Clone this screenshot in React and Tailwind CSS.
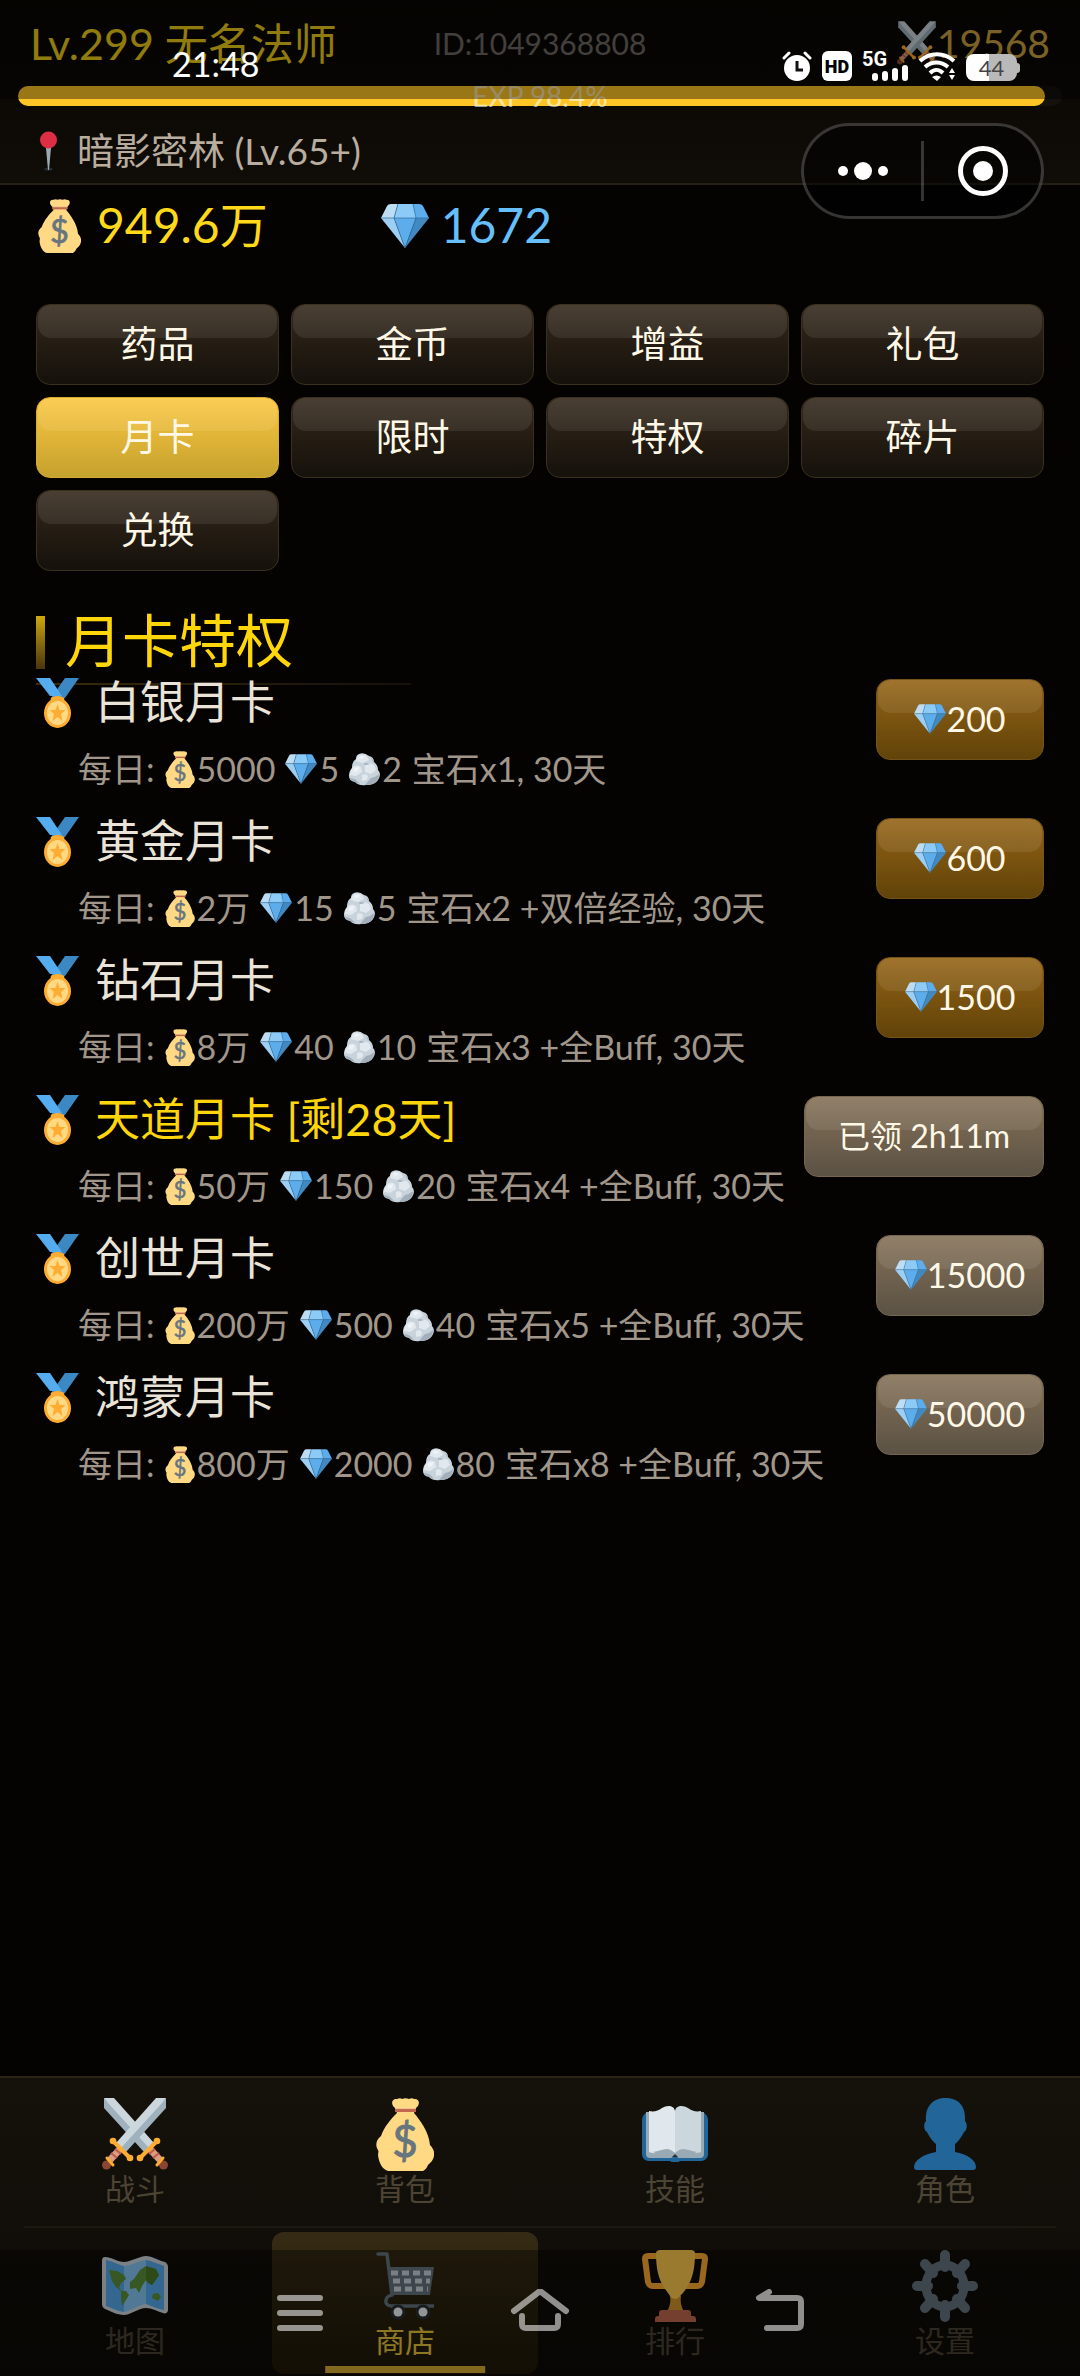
import React from 'react';

const Bag = ({ className }) => (
  <svg viewBox="0 0 58 73" className={className} aria-hidden="true">
    <path fill="#ffd983" d="M19 10C14 6 16 0 21 1c2-1 4-1 5 0 2-1 5-1 7 0 2-1 4-1 5 0 5-1 7 5 2 9l-2 5c6 7 15 19 16 32 3 3 5 7 4 11-1 5-4 7-6 9-1 3-3 5-5 6H12c-6-2-9-8-10-16 0-2 1-3 0-5-3-5-2-10 3-14C8 29 15 21 21 15z" />
    <path fill="#c1694f" d="M19 11h21v3H19z" />
    <path fill="#e6aaaa" opacity=".5" d="M19 10h21v1H19z" />
    <text x="29" y="59" textAnchor="middle" fontSize="44" fontFamily="Lato, sans-serif" stroke="#67757f" strokeWidth="1" fill="#67757f">$</text>
  </svg>
);

const Diamond = ({ className }) => (
  <svg viewBox="0 0 48 44" className={className} aria-hidden="true">
    <path fill="#bdddf4" d="M0 14 6 2q1-2 4-2h7l-4 14z" />
    <path fill="#8ccaf7" d="M17 0h15l4 14H13z" />
    <path fill="#5dadec" d="M32 0h6q3 0 4 2l6 12H35z" />
    <path fill="#9dcff5" d="M0 14h13l11 30z" />
    <path fill="#5dadec" d="M13 14h22L24 44z" />
    <path fill="#4289c1" d="M35 14h13L24 44z" />
    <path fill="none" stroke="#2f6e9f" strokeWidth=".7" d="M17 0l-4 14 11 30 11-30-3-14M0 14h48" />
  </svg>
);

const Rock = ({ className }) => (
  <svg viewBox="0 0 31 33" className={className} aria-hidden="true">
    <path fill="#c9d3db" d="M10 1q5-2 10 2 5 1 5 6 4 3 4 8 4 4 0 10-3 5-12 5-7 1-11-3-6-1-6-6 0-5 3-8 0-7 4-9 0-4 3-5z" />
    <path fill="#e1e8ee" d="M10 2q4-2 8 1l2 4-6 3-7-2q0-4 3-6zM4 14q4-3 8 0l1 5-6 4-6-1q0-5 3-8zM16 12q5-3 9 0l2 5-5 4-6-2zM13 22q4-2 6 1l-1 4-5 1z" />
    <path fill="#f0f4f7" d="M11 3q3-1 5 1l-3 2-3-1zM5 15l5-1-1 4-4 1z" />
    <path fill="#a3b0bc" d="M22 25q5-1 8-4 0 7-6 10-5 1-8 1 3-4 6-7zM1 25q6 0 10 6-4-1-6-3-3 0-4-3zM14 11l3-1 4 1-4 1zM22 5q3 2 3 5-2-2-3-5z" />
  </svg>
);

const Medal = ({ className }) => (
  <svg viewBox="0 0 43 50" className={className} aria-hidden="true">
    <path fill="#3b88c3" d="M29 0h14L29 20H15z" />
    <path fill="#55acee" d="M0 0h14l12 18H14z" />
    <ellipse cx="21.500" cy="21" rx="7" ry="3" fill="#ffac33" />
    <ellipse cx="21.500" cy="35" rx="13.500" ry="15" fill="#ffac33" />
    <ellipse cx="21.500" cy="35" rx="10.500" ry="12" fill="#ffd983" />
    <path fill="#ffac33" d="m21.500 26 2 6h6l-4.500 4 1.500 7-5-4-5 4 1.500-7-4.500-4h6z" />
  </svg>
);

const Pin = ({ className }) => (
  <svg viewBox="0 0 17 40" className={className} aria-hidden="true">
    <ellipse cx="8.500" cy="38" rx="4" ry="1.500" fill="#292f33" />
    <path fill="#99aab5" d="M6 17h5L9 39H8z" />
    <circle cx="8.500" cy="9" r="8.500" fill="#dd2e44" />
  </svg>
);

const Sword = () => (
  <>
    <path fill="#9fb1bd" d="M64 0v10L24 54l-9-8z" />
    <path fill="#ccd6dd" d="M64 0H54L14 45l5 5L60 5z" />
    <path fill="none" stroke="#d99e82" strokeWidth="7" d="M19 50 8 62" />
    <path fill="none" stroke="#be5b4a" strokeWidth="2" d="m13 51 6 5M9 55l6 5" />
    <path fill="none" stroke="#ffac33" strokeWidth="4" d="m11 43 17 17" />
    <circle cx="11" cy="43" r="3.300" fill="#ffac33" />
    <circle cx="28" cy="60" r="3.300" fill="#ffac33" />
    <circle cx="4.500" cy="67" r="4.500" fill="#8a4633" />
    <path fill="none" stroke="#ffac33" strokeWidth="3" strokeLinecap="round" d="m5 60 6 7" />
  </>
);

const Swords = ({ className }) => (
  <svg viewBox="0 0 66 72" className={className} aria-hidden="true">
    <g transform="matrix(-1 0 0 1 66 0)"><Sword /></g>
    <Sword />
  </svg>
);

const Book = ({ className }) => (
  <svg viewBox="0 0 66 56" className={className} aria-hidden="true">
    <path fill="#226699" d="M4 7h58c2 1 4 4 4 7v34c0 4-3 7-7 7H38c-2 2-8 2-10 0H7c-4 0-7-3-7-7V14c0-3 2-6 4-7z" />
    <path fill="#99aab5" d="M4 6h58v42c0 3-2 4-4 4H37l-4-2-4 2H8c-2 0-4-1-4-4z" />
    <path fill="#e1e8ed" d="M7 5c5 1 9 0 13-3 5-3 12-3 13 3v44c-6-5-12-4-16-3-4 2-7 1-10 0z" />
    <path fill="#ccd6dd" d="M59 5c-5 1-9 0-13-3-5-3-12-3-13 3v44c6-5 12-4 16-3 4 2 7 1 10 0z" />
    <path fill="#99aab5" d="M11 46c9-1 14-7 22 1 8-8 13-2 22-1-8 4-15 0-22 4-7-4-14 0-22-4z" />
    <path fill="#292f33" d="m33 48 3 3h-6z" />
  </svg>
);

const Bust = ({ className }) => (
  <svg viewBox="0 0 62 72" className={className} aria-hidden="true">
    <path fill="#269" d="M22 46C17 42 14 36 13 34c-3-1-4-8-1-11C11 8 19 0 32 0s20 9 19 23c3 3 2 10-1 11-1 2-4 8-9 12v8c12 2 21 8 21 15 0 2-1 3-3 3H3c-2 0-3-1-3-3 0-7 10-13 22-15z" />
  </svg>
);

const WorldMap = ({ className }) => (
  <svg viewBox="0 0 66 60" className={className} aria-hidden="true">
    <path fill="#ccd6dd" d="M3 1c6 0 13 5 19 5S38 0 44 0s14 5 19 6c2 1 3 3 3 5v43c0 3-3 4-5 3-6-2-12-5-17-5-7 0-16 7-22 7-7 0-14-4-19-6-2-1-3-3-3-5V5c0-3 1-4 3-4z" />
    <path fill="#55acee" d="M4 4c6 1 13 5 18 6v46C16 55 10 52 4 50zM44 4c6 1 12 4 18 6v44c-6-1-12-4-18-6z" />
    <path fill="#88c9f9" d="M22 10c6 0 15-5 22-6v44c-7 1-16 7-22 8z" />
    <path fill="#5c913b" d="M7 14l8 1 7 4 2 4-5 4-2 5 4 5-7-6-4-6zM19 35l5 0 3 4-3 5-4 6-1-8zM28 26l4-3 6-9 6-4 10 3 3 6-4 6-3 4-4-2-2-3-4 6-3 7-3-5-6 1zM51 38l5-1 3 4-3 4-6-3z" />
    <path fill="#3e721d" opacity=".6" d="M44 10l10 3 3 6-4 6-3 4-4-2-2-3z" />
  </svg>
);

const Cart = ({ className }) => (
  <svg viewBox="0 0 58 68" className={className} aria-hidden="true">
    <path fill="none" stroke="#66757f" strokeWidth="3.500" strokeLinecap="round" strokeLinejoin="round" d="M2 2h9l5 41c-8 1-8 11-1 11h42" />
    <path fill="#66757f" d="M12 15h46l-4 28H15z" />
    <path fill="none" stroke="#ccd6dd" strokeWidth="5" strokeDasharray="7 4" d="M15 21h40M17 29h37M18 37h34" />
    <circle cx="22" cy="60" r="7.500" fill="#292f33" />
    <circle cx="22" cy="60" r="4.500" fill="#f5f8fa" />
    <circle cx="47" cy="60" r="7.500" fill="#292f33" />
    <circle cx="47" cy="60" r="4.500" fill="#f5f8fa" />
  </svg>
);

const Trophy = ({ className }) => (
  <svg viewBox="0 0 66 72" className={className} aria-hidden="true">
    <path fill="none" stroke="#ffac33" strokeWidth="6" strokeLinejoin="round" d="M17 6H6c-2 0-3 1-3 3l3 23c1 3 2 4 5 4h13M49 6h11c2 0 3 1 3 3l-3 23c-1 3-2 4-5 4H42" />
    <path fill="#d4952c" d="M28 46h11c-1 6 0 10 3 16H25c3-6 4-10 3-16z" />
    <path fill="#ffcc4d" d="M14 3c0-2 2-3 4-3h31c2 0 4 1 4 3 0 20-4 30-12 40-3 3-5 6-8 6s-5-3-7-6C18 33 14 23 14 3z" />
    <path fill="#c1694f" d="M17 63c0-2 1-3 3-3h26c2 0 3 1 3 3v3h2c2 0 3 1 3 3v3H13v-3c0-2 1-3 3-3h1z" />
  </svg>
);

const Gear = ({ className }) => (
  <svg viewBox="0 0 66 72" className={className} aria-hidden="true">
    <g stroke="#66757f" strokeWidth="10" strokeLinecap="round">
      <path d="M33 5v12M33 55v12M5 36h11M50 36h11M13 14l8 9M45 49l8 9M53 14l-8 9M21 49l-8 9" />
    </g>
    <ellipse cx="33" cy="36" rx="19" ry="21" fill="none" stroke="#66757f" strokeWidth="9" />
  </svg>
);

const tabs = ['药品', '金币', '增益', '礼包', '月卡', '限时', '特权', '碎片', '兑换'];

const cards = [
  { name: '白银月卡', gold: '5000', gem: '5', stone: '2', rest: '宝石x1, 30天', price: '200', tone: 'gold' },
  { name: '黄金月卡', gold: '2万', gem: '15', stone: '5', rest: '宝石x2 +双倍经验, 30天', price: '600', tone: 'gold' },
  { name: '钻石月卡', gold: '8万', gem: '40', stone: '10', rest: '宝石x3 +全Buff, 30天', price: '1500', tone: 'gold' },
  { name: '天道月卡 [剩28天]', gold: '50万', gem: '150', stone: '20', rest: '宝石x4 +全Buff, 30天', claimed: '已领 2h11m', tone: 'grey' },
  { name: '创世月卡', gold: '200万', gem: '500', stone: '40', rest: '宝石x5 +全Buff, 30天', price: '15000', tone: 'grey' },
  { name: '鸿蒙月卡', gold: '800万', gem: '2000', stone: '80', rest: '宝石x8 +全Buff, 30天', price: '50000', tone: 'grey' },
];

const navTop = [
  { label: '战斗', icon: <Swords className="h-[72px] w-[66px]" /> },
  { label: '背包', icon: <Bag className="h-[73px] w-[58px]" /> },
  { label: '技能', icon: <Book className="h-[56px] w-[66px]" /> },
  { label: '角色', icon: <Bust className="h-[72px] w-[62px]" /> },
];

const navBottom = [
  { label: '地图', icon: <WorldMap className="h-[60px] w-[66px]" /> },
  { label: '商店', icon: <Cart className="h-[68px] w-[58px]" />, active: true },
  { label: '排行', icon: <Trophy className="h-[72px] w-[66px]" /> },
  { label: '设置', icon: <Gear className="h-[72px] w-[66px]" /> },
];

const tones = {
  dark: 'border-[#3a301d] from-[#35291c] to-[#15110b]',
  active: 'border-[#d6ab33] from-[#fbc740] to-[#c5a12e]',
  gold: 'border-[#74531a] from-[#946416] to-[#614309]',
  grey: 'border-[#756650] from-[#857157] to-[#5b5244]',
};

const GlossButton = ({ tone, className = '', children, ...props }) => (
  <button
    type="button"
    className={`relative h-[81px] rounded-[14px] border bg-linear-to-b text-[#fff8e7] ${tones[tone]} ${className}`}
    {...props}
  >
    <span className="absolute inset-x-px top-0 h-[33px] rounded-[13px] bg-linear-to-b from-white/10 to-white/8" />
    <span className="relative flex items-center justify-center pb-[2px]">{children}</span>
  </button>
);

const NavItem = ({ label, icon, active }) => (
  <button
    type="button"
    aria-current={active ? 'page' : undefined}
    className={`relative mx-[2px] flex h-[142px] flex-col items-center rounded-xl pt-4 ${active ? 'bg-linear-to-b from-[#362b14] to-[#201908] text-[#e9c93c]' : 'text-[#4c4434]'}`}
  >
    <span className="flex h-[76px] items-center">{icon}</span>
    <span className="text-[30px] leading-8">{label}</span>
    {active && <span className="absolute bottom-px left-1/2 h-[7px] w-3/5 -translate-x-1/2 bg-[#daaf36]" />}
  </button>
);

const StatusBar = () => (
  <div className="absolute inset-x-0 top-0 flex h-[99px] justify-between bg-black/40 pr-[60px] pl-[172px] text-white">
    <span className="pt-[44px] text-[34px] leading-10">21:48</span>
    <div className="flex items-start gap-[10px] pt-[51px]">
      <svg viewBox="0 0 30 30" className="size-[30px]" aria-label="alarm">
        <circle cx="15" cy="17" r="13" fill="#fff" />
        <path d="M15 10v9h6" fill="none" stroke="#111" strokeWidth="3" />
        <path d="m2 7 5-5M28 7l-5-5" stroke="#fff" strokeWidth="3" strokeLinecap="round" />
      </svg>
      <span className="flex size-[30px] items-center justify-center rounded-md bg-white font-[Roboto] text-[18px] font-black text-black">HD</span>
      <div className="relative h-[30px] w-[46px]">
        <span className="absolute top-0 left-0 font-[Roboto] text-[20px] leading-4 font-bold">5G</span>
        <svg viewBox="0 0 46 30" className="size-full" aria-label="signal">
          <path d="M13 25v2M23 23v4M33 20v7M43 17v10" stroke="#fff" strokeWidth="6" strokeLinecap="round" />
        </svg>
      </div>
      <svg viewBox="0 0 38 30" className="h-[30px] w-[38px]" aria-label="wifi">
        <g fill="none" stroke="#fff" strokeWidth="4">
          <path d="M2 10c10-9 24-9 34 0" />
          <path d="M7 16c7-6 16-6 23 0" />
          <path d="M12 22c4-4 9-4 13 0" />
        </g>
        <path d="M14 26c3-2 6-2 9 0l-4 4zM31 22l3-5 3 5zM31 24h6l-3 5z" fill="#fff" />
      </svg>
      <div className="flex items-center pt-[3px]">
        <span className="flex h-[27px] w-[51px] items-center justify-center rounded-lg bg-linear-to-r from-white from-45% to-[#b9b9b9] to-45% text-[22px] text-[#444]">44</span>
        <span className="h-[10px] w-[3px] rounded-r bg-[#b9b9b9]" />
      </div>
    </div>
  </div>
);

const Capsule = () => (
  <div className="absolute top-[123px] right-9 flex h-24 w-[243px] items-center rounded-full border-3 border-white/20 bg-black/50">
    <button type="button" aria-label="更多" className="flex h-full flex-1 items-center justify-center gap-[6px]">
      <span className="size-[10px] rounded-full bg-white" />
      <span className="size-[18px] rounded-full bg-white" />
      <span className="size-[10px] rounded-full bg-white" />
    </button>
    <span className="h-[60px] w-[3px] bg-white/20" />
    <button type="button" aria-label="关闭" className="flex h-full flex-1 items-center justify-center">
      <span className="flex size-[50px] items-center justify-center rounded-full border-5 border-white">
        <span className="size-5 rounded-full bg-white" />
      </span>
    </button>
  </div>
);

const SystemNav = () => (
  <div className="absolute inset-x-0 bottom-0 flex h-[126px] items-center justify-center gap-[180px] bg-black/40 text-white/55">
    <button type="button" aria-label="菜单">
      <svg viewBox="0 0 60 48" className="h-12 w-[60px]" stroke="currentColor" strokeWidth="6" strokeLinecap="round">
        <path d="M10 9h40M10 24h40M10 39h40" />
      </svg>
    </button>
    <button type="button" aria-label="主页">
      <svg viewBox="0 0 60 48" className="h-12 w-[60px]" fill="none" stroke="currentColor" strokeWidth="6" strokeLinecap="round" strokeLinejoin="round">
        <path d="M4 22 30 2l26 20M12 27v8c0 3 1 4 4 4h28c3 0 4-1 4-4v-8" />
      </svg>
    </button>
    <button type="button" aria-label="返回">
      <svg viewBox="0 0 60 48" className="h-12 w-[60px]" fill="none" stroke="currentColor" strokeWidth="6" strokeLinecap="round" strokeLinejoin="round">
        <path d="M19 3 9 9h38c3 0 4 1 4 4v22c0 3-1 4-4 4H17" />
      </svg>
    </button>
  </div>
);

const App = () => {
  return (
    <div className="relative flex min-h-screen flex-col bg-[#040302] font-[Lato,'Noto_Sans_CJK_SC',sans-serif] whitespace-nowrap">
      <header className="border-b-2 border-[#261f16] bg-linear-to-b from-[#090703] to-[#100c07]">
        <div className="grid h-[86px] grid-cols-3 items-center px-[30px]">
          <span className="text-[43px] leading-none text-[#f0cf18]">Lv.299 无名法师</span>
          <span className="text-center text-[30px] leading-none text-[#6e6a66]">ID:1049368808</span>
          <span className="flex items-center justify-end text-[39px] leading-none text-[#cba23f]">
            <Swords className="h-[44px] w-10" />
            19568
          </span>
        </div>
        <div className="relative mx-[18px] h-5 rounded-full bg-[#15110c]">
          <div className="h-full w-[98.4%] rounded-full bg-[#ffc526]" />
          <span className="absolute inset-0 flex items-center justify-center text-[28px] leading-none text-white/60">EXP 98.4%</span>
        </div>
        <div className="flex h-[77px] items-center gap-5 px-10 pt-3 text-[37px] leading-none text-[#b8ad9e]">
          <Pin className="h-10 w-[17px]" />
          <span>暗影密林 (Lv.65+)</span>
        </div>
      </header>

      <main className="flex-1 px-9">
        <div className="grid h-[82px] grid-cols-3 items-center gap-5 text-[48px] leading-none">
          <div className="flex items-center gap-4 pl-[2px] text-[#ffd91a]">
            <Bag className="h-[54px] w-[43px]" />
            <span className="pb-[2px]">949.6万</span>
          </div>
          <div className="flex items-center gap-3 pl-[2px] text-[#64bffa]">
            <Diamond className="h-[44px] w-12" />
            <span className="pb-[2px]">1672</span>
          </div>
        </div>

        <div className="mt-[37px] grid grid-cols-4 gap-3 text-[37px]">
          {tabs.map((tab) => (
            <GlossButton key={tab} tone={tab === '月卡' ? 'active' : 'dark'} aria-pressed={tab === '月卡'}>
              {tab}
            </GlossButton>
          ))}
        </div>

        <div className="relative mt-[45px] flex h-[53px] items-center gap-5">
          <span className="h-full w-[9px] bg-linear-to-b from-[#cfa90c] to-[#4b350a]" />
          <h2 className="pb-1 text-[57px] leading-none text-[#ffd60a]">月卡特权</h2>
          <span className="absolute -bottom-4 left-0 h-[2px] w-[375px] bg-linear-to-r from-[#3a2d0a] to-[#15100a]" />
        </div>

        <ul className="relative mt-[10px]">
          {cards.map((card) => (
            <li key={card.name} className="flex h-[139px] items-start justify-between">
              <div>
                <div className={`flex h-12 items-center gap-4 text-[45px] leading-none ${card.claimed ? 'text-[#ffd60a]' : 'text-[#eae4d8]'}`}>
                  <Medal className="h-[50px] w-[43px]" />
                  <span className="pb-[2px]">{card.name}</span>
                </div>
                <div className="mt-[18px] flex h-12 items-center gap-[10px] pl-[42px] text-[34px] leading-none text-[#a0968a]">
                  <span>每日:</span>
                  <span className="flex items-center gap-[2px]"><Bag className="h-[37px] w-[30px]" />{card.gold}</span>
                  <span className="flex items-center gap-[2px]"><Diamond className="h-[30px] w-8" />{card.gem}</span>
                  <span className="flex items-center gap-[2px]"><Rock className="h-[33px] w-[31px]" />{card.stone}</span>
                  <span>{card.rest}</span>
                </div>
              </div>
              {card.claimed ? (
                <GlossButton tone={card.tone} className="w-[240px] text-[32px]">{card.claimed}</GlossButton>
              ) : (
                <GlossButton tone={card.tone} className="w-[168px] text-[34px]">
                  <Diamond className="h-[30px] w-8" />
                  {card.price}
                </GlossButton>
              )}
            </li>
          ))}
        </ul>
      </main>

      <nav className="border-t-2 border-[#2b2313] bg-linear-to-b from-[#15120c] to-[#0e0b07] py-[2px]">
        <div className="grid grid-cols-4">
          {navTop.map((item) => <NavItem key={item.label} {...item} />)}
        </div>
        <div className="mx-6 my-1 h-[2px] bg-[#1b1711]" />
        <div className="grid grid-cols-4">
          {navBottom.map((item) => <NavItem key={item.label} {...item} />)}
        </div>
      </nav>

      <StatusBar />
      <Capsule />
      <SystemNav />
    </div>
  );
};

export default App;
